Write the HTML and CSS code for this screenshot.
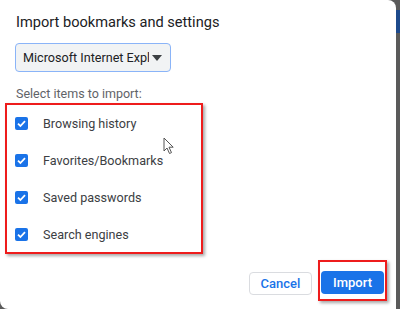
FILE: index.html
```html
<!DOCTYPE html>
<html>
<head>
<meta charset="utf-8">
<link rel="stylesheet" href="styles.css">
</head>
<body>
<div class="screen">
  <div class="dialog">
    <h1 class="title">Import bookmarks and settings</h1>
    <div class="select">
      <span class="select-text">Microsoft Internet Explorer</span>
      <span class="caret"></span>
    </div>
    <div class="subhead">Select items to import:</div>
    <div class="highlight list">
      <div class="row"><span class="cb"><svg viewBox="0 0 13 13" width="13" height="13"><path d="M3 6.7 L5.4 9 L10 4.2" fill="none" stroke="#fff" stroke-width="1.8"/></svg></span><span class="label">Browsing history</span></div>
      <div class="row"><span class="cb"><svg viewBox="0 0 13 13" width="13" height="13"><path d="M3 6.7 L5.4 9 L10 4.2" fill="none" stroke="#fff" stroke-width="1.8"/></svg></span><span class="label">Favorites/Bookmarks</span></div>
      <div class="row"><span class="cb"><svg viewBox="0 0 13 13" width="13" height="13"><path d="M3 6.7 L5.4 9 L10 4.2" fill="none" stroke="#fff" stroke-width="1.8"/></svg></span><span class="label">Saved passwords</span></div>
      <div class="row"><span class="cb"><svg viewBox="0 0 13 13" width="13" height="13"><path d="M3 6.7 L5.4 9 L10 4.2" fill="none" stroke="#fff" stroke-width="1.8"/></svg></span><span class="label">Search engines</span></div>
    </div>
    <div class="actions">
      <button class="btn cancel">Cancel</button>
      <div class="highlight import-wrap"><button class="btn import">Import</button></div>
    </div>
    <svg class="cursor" width="12" height="18" viewBox="0 0 12 18"><path d="M1 1 L1 14 L4 11 L6.5 16.5 L8.5 15.6 L6 10.2 L10.2 10.2 Z" fill="#fff" stroke="#555" stroke-width="1" stroke-linejoin="round"/></svg>
  </div>
  <div class="side"><div class="side-blue"></div></div>
</div>
</body>
</html>
```
FILE: styles.css
```css
* { box-sizing: border-box; }
html, body { margin: 0; padding: 0; }
body {
  width: 400px;
  height: 309px;
  overflow: hidden;
  background: #5b5b5b;
  font-family: Roboto, "Liberation Sans", sans-serif;
}
.screen {
  display: flex;
  height: 309px;
}
.dialog {
  position: relative;
  width: 396px;
  height: 309px;
  background: #fff;
  border-radius: 0 8px 0 8px;
  padding: 12px 0 0 0;
  flex-shrink: 0;
}
.side {
  flex: 1;
  background: #5a5a5a;
  padding-top: 10px;
}
.side-blue {
  height: 23px;
  background: #1d4a8c;
}
.title {
  margin: 0 0 0 16px;
  font-size: 14.6px;
  font-weight: 400;
  color: #202124;
  line-height: 20px;
}
.select {
  margin: 11px 0 0 15px;
  width: 156px;
  height: 29px;
  border: 1px solid #8ab4f8;
  border-radius: 4px;
  background: #f1f3f4;
  display: flex;
  align-items: center;
  padding-left: 7px;
  padding-right: 8px;
}
.select-text {
  flex: 1;
  overflow: hidden;
  white-space: nowrap;
  font-size: 12.6px;
  color: #202124;
}
.caret {
  margin-left: 3px;
  width: 0;
  height: 0;
  border-left: 5px solid transparent;
  border-right: 5px solid transparent;
  border-top: 6px solid #3c4043;
}
.subhead {
  margin: 14px 0 0 16px;
  font-size: 12.5px;
  color: #5f6368;
  line-height: 16px;
}
.highlight {
  border: 2px solid #ee1c1c;
  box-shadow: 2px 2px 3px rgba(0,0,0,0.35);
}
.list {
  margin: 1px 0 0 5px;
  width: 198px;
  height: 151px;
  padding: 12px 0 0 8px;
  display: flex;
  flex-direction: column;
  gap: 24px;
}
.row {
  display: flex;
  align-items: center;
  height: 13px;
}
.cb {
  width: 13px;
  height: 13px;
  border-radius: 2px;
  background: #1a73e8;
  display: flex;
}
.label {
  margin-left: 15px;
  font-size: 12.6px;
  color: #3c4043;
}
.actions {
  display: flex;
  justify-content: flex-end;
  align-items: flex-end;
  margin-top: 6px;
  padding-right: 9px;
}
.btn {
  font-family: Roboto, "Liberation Sans", sans-serif;
  font-size: 13px;
  font-weight: 500;
  height: 23px;
  width: 63px;
  border-radius: 4px;
  padding: 0;
  cursor: pointer;
}
.cancel {
  background: #fff;
  color: #1a73e8;
  border: 1px solid #dadce0;
  margin-bottom: 6px;
  margin-right: 6px;
}
.import-wrap {
  padding: 9px 1px 5px 1px;
}
.import {
  background: #1a73e8;
  color: #fff;
  border: none;
  display: block;
}
.cursor {
  position: absolute;
  left: 163px;
  top: 137px;
}
```
